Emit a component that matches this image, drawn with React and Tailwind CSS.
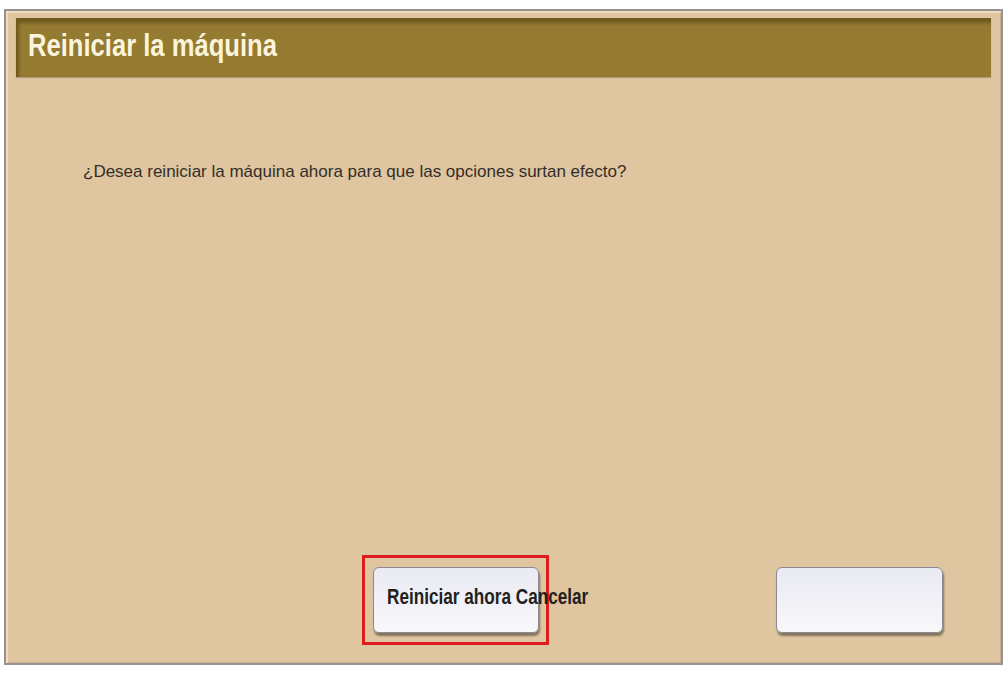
export default function App() {
  const sans = { fontFamily: '"Liberation Sans", Arial, sans-serif' };
  return (
    <div className="w-[1006px] h-[674px] bg-white pt-[9px] pl-[4px]">
      <div className="w-[999px] h-[656px] bg-[#dfc5a0] border-2 border-[#9a9290] shadow-[inset_2px_2px_0_#f0dcc0,inset_-1px_-1px_0_#c9b08a] flex flex-col px-[10px] pt-[7px]">
        <div className="h-[59px] bg-[#957a31] border-t-[3px] border-[#6f5a1c] shadow-[inset_3px_2px_3px_rgba(80,62,12,0.55),0_1px_1px_rgba(0,0,0,0.2)] flex items-start pt-[8px] pl-[12px]">
          <span style={sans} className="inline-block origin-left scale-x-[0.8] whitespace-nowrap text-[32px] font-bold text-[#fbf4dc] leading-none">Reiniciar la máquina</span>
        </div>
        <div style={sans} className="mt-[86px] pl-[67px] text-[17px] text-[#332f28] leading-none">
          ¿Desea reiniciar la máquina ahora para que las opciones surtan efecto?
        </div>
        <div className="flex-1" />
        <div className="flex items-end pb-[30px]">
          <div className="ml-[346px] w-[187px] h-[90px] border-[3px] border-[#e01b1b] mb-[-12px] pt-[9px] pl-[8px] relative">
            <div className="w-[166px] h-[66px] rounded-[6px] bg-gradient-to-b from-[#e9eaf2] to-[#f8f8fb] border border-[#8c8a92] shadow-[1px_3px_2px_rgba(60,50,40,0.55)]" />
            <span style={sans} className="absolute left-[22px] top-[28px] inline-block origin-left scale-x-[0.78] whitespace-nowrap text-[22px] font-bold text-[#231f1c] leading-none">Reiniciar ahora Cancelar</span>
          </div>
          <div className="ml-auto mr-[48px] w-[167px] h-[66px] rounded-[6px] bg-gradient-to-b from-[#e9eaf2] to-[#f8f8fb] border border-[#8c8a92] shadow-[1px_3px_2px_rgba(60,50,40,0.55)]" />
        </div>
      </div>
    </div>
  );
}
